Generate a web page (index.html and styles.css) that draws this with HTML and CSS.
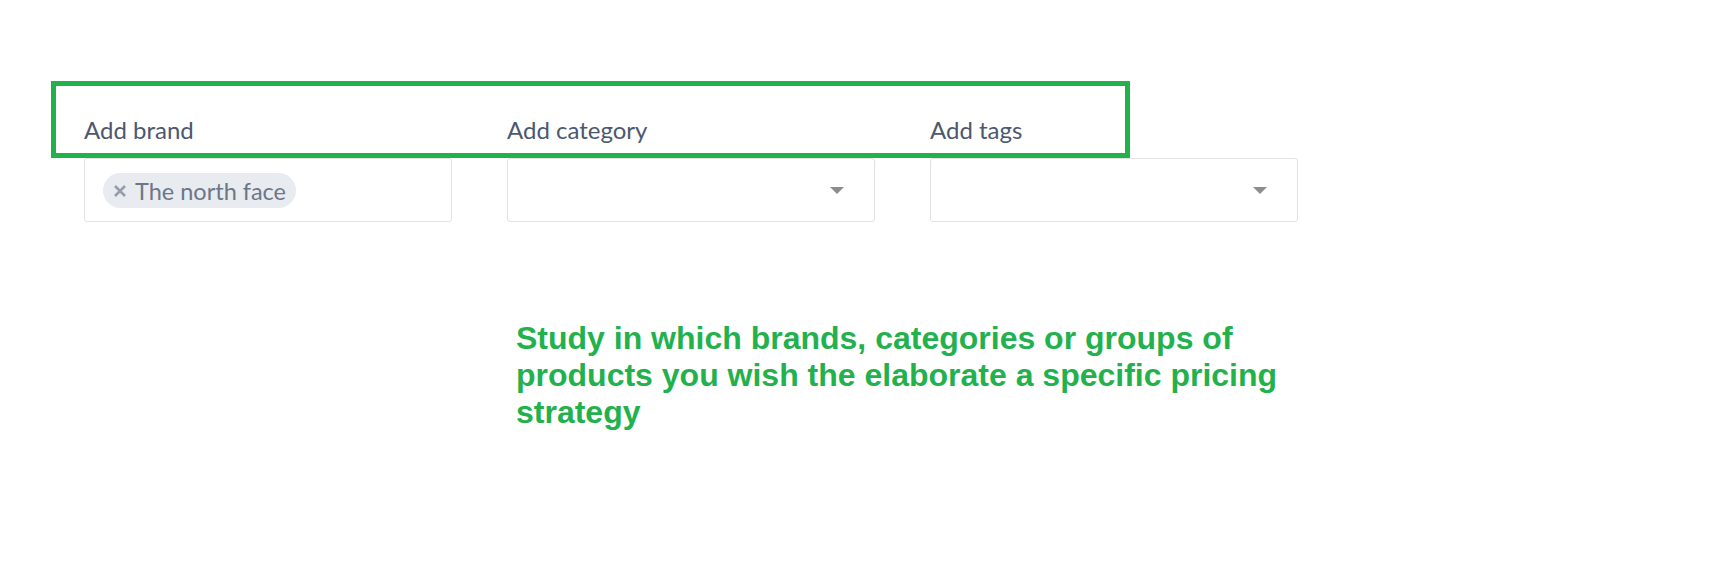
FILE: index.html
```html
<!DOCTYPE html>
<html>
<head>
<meta charset="utf-8">
<link rel="stylesheet" href="styles.css">
</head>
<body>
<div class="page">
  <div class="fields">
    <div class="field">
      <label class="label">Add brand</label>
      <div class="input">
        <span class="chip"><svg class="chip-x" width="14" height="14" viewBox="0 0 14 14"><path d="M2 2 L12 12 M12 2 L2 12" stroke="#959cab" stroke-width="2.6" stroke-linecap="butt"/></svg><span class="chip-text">The north face</span></span>
      </div>
    </div>
    <div class="field">
      <label class="label">Add category</label>
      <div class="input select"><span class="caret"></span></div>
    </div>
    <div class="field">
      <label class="label">Add tags</label>
      <div class="input select"><span class="caret"></span></div>
    </div>
  </div>
  <div class="highlight"></div>
  <p class="note">Study in which brands, categories or groups of products you wish the elaborate a specific pricing strategy</p>
</div>
</body>
</html>
```
FILE: styles.css
```css
html, body {
  margin: 0;
  padding: 0;
  background: #ffffff;
}
.page {
  position: relative;
  width: 1727px;
  height: 582px;
  padding: 115px 0 0 84px;
  box-sizing: border-box;
}
.fields {
  display: flex;
  gap: 55px;
}
.field {
  display: flex;
  flex-direction: column;
  width: 368px;
}
.label {
  font-family: Lato, "Open Sans", sans-serif;
  font-size: 24px;
  color: #4c586e;
  line-height: 30px;
  height: 43px;
}
.input {
  height: 64px;
  box-sizing: border-box;
  border: 1px solid #e2e2e2;
  border-radius: 3px;
  display: flex;
  align-items: center;
  padding: 0 18px;
}
.select {
  justify-content: flex-end;
  padding-right: 30px;
}
.caret {
  width: 0;
  height: 0;
  border-left: 7px solid transparent;
  border-right: 7px solid transparent;
  border-top: 7px solid #8d8d8d;
}
.chip {
  display: inline-flex;
  align-items: center;
  height: 35px;
  border-radius: 18px;
  background: #e8ecf0;
  padding: 1px 10px 0 10px;
  box-sizing: border-box;
  font-family: Lato, "Open Sans", sans-serif;
  font-size: 23.5px;
  color: #6d7688;
}
.chip-x {
  display: block;
  margin-right: 8px;
}
.highlight {
  position: absolute;
  left: 51px;
  top: 81px;
  width: 1079px;
  height: 77px;
  box-sizing: border-box;
  border: 5px solid #22b14c;
}
.note {
  margin: 98px 0 0 432px;
  width: 780px;
  font-family: "Liberation Sans", Arial, sans-serif;
  font-weight: bold;
  font-size: 32px;
  line-height: 37px;
  color: #22b14c;
}
```
